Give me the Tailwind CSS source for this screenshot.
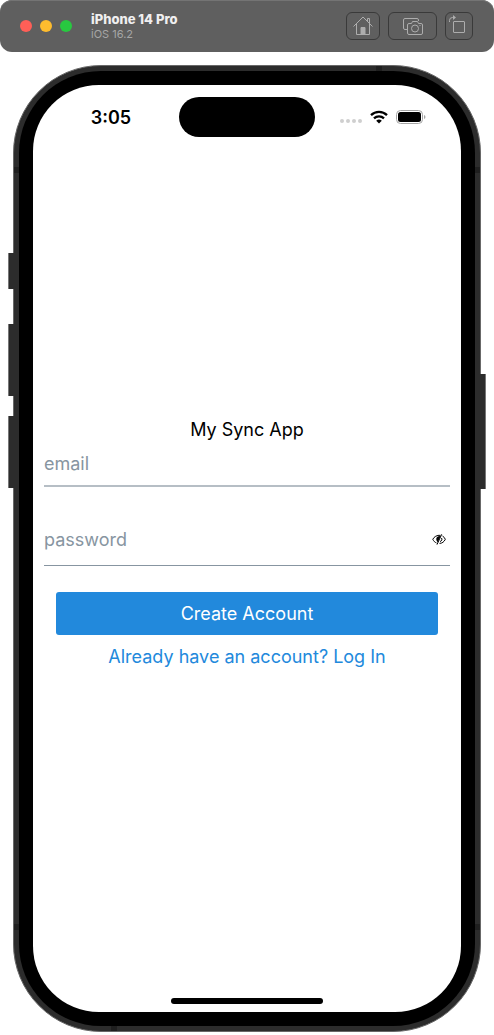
<!DOCTYPE html>
<html lang="en">
<head>
<meta charset="utf-8">
<meta name="viewport" content="width=device-width, initial-scale=1">
<title>iPhone 14 Pro</title>
<script src="https://cdn.jsdelivr.net/npm/@tailwindcss/browser@4"></script>
</head>
<body class="min-h-screen flex flex-col bg-white font-['Inter',sans-serif]">
<header class="h-13 shrink-0 flex items-center rounded-xl bg-[#5f5f5f] inset-shadow-[0_1px_0_#747474] pl-5 pr-[21px]">
  <div class="flex gap-2">
    <button aria-label="Close" class="size-3 rounded-full bg-[#ff5f57]"></button>
    <button aria-label="Minimize" class="size-3 rounded-full bg-[#febc2e]"></button>
    <button aria-label="Zoom" class="size-3 rounded-full bg-[#28c840]"></button>
  </div>
  <div class="ml-[19px] flex-1">
    <h1 class="text-[13px] leading-4 font-extrabold text-[#f0eff0]">iPhone 14 Pro</h1>
    <p class="text-[11px] leading-[14px] text-[#a6a6a6]">iOS 16.2</p>
  </div>
  <div class="flex gap-2 text-[#adadad]">
    <button aria-label="Home" class="w-[34px] h-7 rounded-md border border-[#3a3a3a] flex items-center justify-center">
      <svg class="size-5" viewBox="0 0 20 20" fill="none" stroke="currentColor"><path d="M.5 10.500 10 1l9.500 9.500M3.500 8v10.500h13V8M14.500 5V2.500h2v5"/><path d="M8 18.500v-7h4v7z" fill="currentColor"/></svg>
    </button>
    <button aria-label="Screenshot" class="w-[49px] h-7 rounded-md border border-[#3a3a3a] flex items-center justify-center">
      <svg class="w-[22px] h-5" viewBox="0 0 22 20" fill="none" stroke="currentColor"><path d="M5 13.500H3a1.500 1.500 0 0 1-1.500-1.500V4A1.500 1.500 0 0 1 3 2.500h12A1.500 1.500 0 0 1 16.500 4v1"/><path d="M7 7.500h2.500l1-2h5l1 2H19a1.500 1.500 0 0 1 1.500 1.500v8a1.500 1.500 0 0 1-1.500 1.500H7A1.500 1.500 0 0 1 5.500 17V9A1.500 1.500 0 0 1 7 7.500z"/><circle cx="13" cy="12.500" r="3.500"/><path d="M17.500 9.500h1"/></svg>
    </button>
    <button aria-label="Rotate" class="w-7 h-7 rounded-md border border-[#3a3a3a] flex items-center justify-center">
      <svg class="w-6 h-6" viewBox="0 0 24 24" fill="none" stroke="currentColor"><rect x="6.500" y="7.500" width="11" height="11" rx=".5"/><path d="M2.500 8V6.500a3 3 0 0 1 3-3h2"/><path d="M6 1l3 2.500L6 6z" fill="currentColor" stroke="none"/></svg>
    </button>
  </div>
</header>

<main class="flex-1 flex px-[13px] pt-[13px] pb-[3px]">
  <div class="relative flex-1 flex rounded-[88px] bg-[#2c2c2c] border border-[#686868] p-[5px]">
    <i class="absolute -left-1.5 top-[187px] w-1.5 h-9 bg-[#2c2c2c] border-l border-[#777]"></i>
    <i class="absolute -left-1.5 top-[258px] w-1.5 h-18 bg-[#2c2c2c] border-l border-[#777]"></i>
    <i class="absolute -left-1.5 top-[350px] w-1.5 h-18 bg-[#2c2c2c] border-l border-[#777]"></i>
    <i class="absolute -right-1.5 top-[308px] w-1.5 h-[115px] bg-[#2c2c2c] border-r border-[#777]"></i>
    <i class="absolute left-0 top-[101px] w-[5px] h-1.5 bg-[#1f1f1f]"></i>
    <i class="absolute right-0 top-[101px] w-[5px] h-1.5 bg-[#1f1f1f]"></i>
    <i class="absolute left-0 bottom-[101px] w-[5px] h-1.5 bg-[#1f1f1f]"></i>
    <i class="absolute right-0 bottom-[101px] w-[5px] h-1.5 bg-[#1f1f1f]"></i>
    <i class="absolute right-[98px] top-0 w-1.5 h-[5px] bg-[#1f1f1f]"></i>
    <i class="absolute left-[97px] bottom-0 w-1.5 h-[5px] bg-[#1f1f1f]"></i>
    <div class="flex-1 flex rounded-[82px] bg-black p-[14px]">
      <div class="flex-1 min-w-0 flex flex-col rounded-[66px] bg-white">
        <div class="h-16 shrink-0 grid grid-cols-[1fr_136px_1fr] items-center">
          <time class="pl-2.5 pt-0.5 text-center text-lg font-semibold leading-6">3:05</time>
          <div class="h-10 rounded-full bg-black"></div>
          <div class="flex items-center pl-[25px]">
            <svg class="w-[22px] h-1 mt-2" viewBox="0 0 22 4" fill="#cfcfcf"><circle cx="2" cy="2" r="2"/><circle cx="8" cy="2" r="2"/><circle cx="14" cy="2" r="2"/><circle cx="20" cy="2" r="2"/></svg>
            <svg class="w-[18px] h-[14px] ml-2" viewBox="0 0 18 14" fill="none" stroke="#000" stroke-width="2.300"><path d="M1 5.200a11.500 11.500 0 0 1 16 0M4 8.400a7.200 7.200 0 0 1 10 0"/><path d="M6.200 10.700a4.200 4.200 0 0 1 5.600 0L9 13.500z" fill="#000" stroke="none"/></svg>
            <svg class="w-[30px] h-[14px] ml-2" viewBox="0 0 30 14"><rect x=".5" y=".5" width="26" height="13" rx="4" fill="none" stroke="#a5a5a5"/><rect x="2" y="2" width="23" height="10" rx="2.500"/><path d="M28 5v4q1.500-.5 1.500-2T28 5z" fill="#a5a5a5"/></svg>
          </div>
        </div>

        <form class="flex-1 flex flex-col justify-center px-[11px] pb-2.5 text-lg leading-6">
          <h2 class="text-center text-black">My Sync App</h2>
          <input type="email" aria-label="email" placeholder="email" class="w-full h-[45px] border-b-2 border-[#b6bec5] placeholder:text-[#8795a1] outline-none">
          <div class="mt-[27px] h-[52px] flex items-center border-b border-[#8795a1]">
            <input type="password" aria-label="password" placeholder="password" class="flex-1 min-w-0 h-full placeholder:text-[#8795a1] outline-none">
            <button type="button" aria-label="Show password" class="mr-1">
              <svg class="w-[14px] h-[11px]" viewBox="0 0 14 11" fill="none" stroke="#000"><path d="M8.500 1.300C5 .8 1.800 3 .8 5.300c.8 1.800 2.100 3 3.700 3.700M10.500 2c1.400.8 2.300 2 2.800 3.300C12.200 7.800 10 9.400 7.500 9.400M9.500 4c1 1.500.2 3.200-1.500 3.500"/><path d="M9.700.3 5 10.600"/><path d="M4.300 5.500C4 3 6 1.700 8.700 2L5.800 8.200C4.900 7.500 4.400 6.500 4.300 5.500z" fill="#000" stroke="none"/></svg>
            </button>
          </div>
          <button type="submit" class="mx-3 mt-[26px] h-[43px] rounded-[3px] bg-[#2289dc] text-white">Create Account</button>
          <a href="#login" class="mt-2.5 self-center text-[#2289dc]">Already have an account? Log In</a>
        </form>

        <div class="h-16 shrink-0 flex items-end justify-center pb-2">
          <div class="w-[152px] h-1.5 rounded-full bg-black"></div>
        </div>
      </div>
    </div>
  </div>
</main>
</body>
</html>
